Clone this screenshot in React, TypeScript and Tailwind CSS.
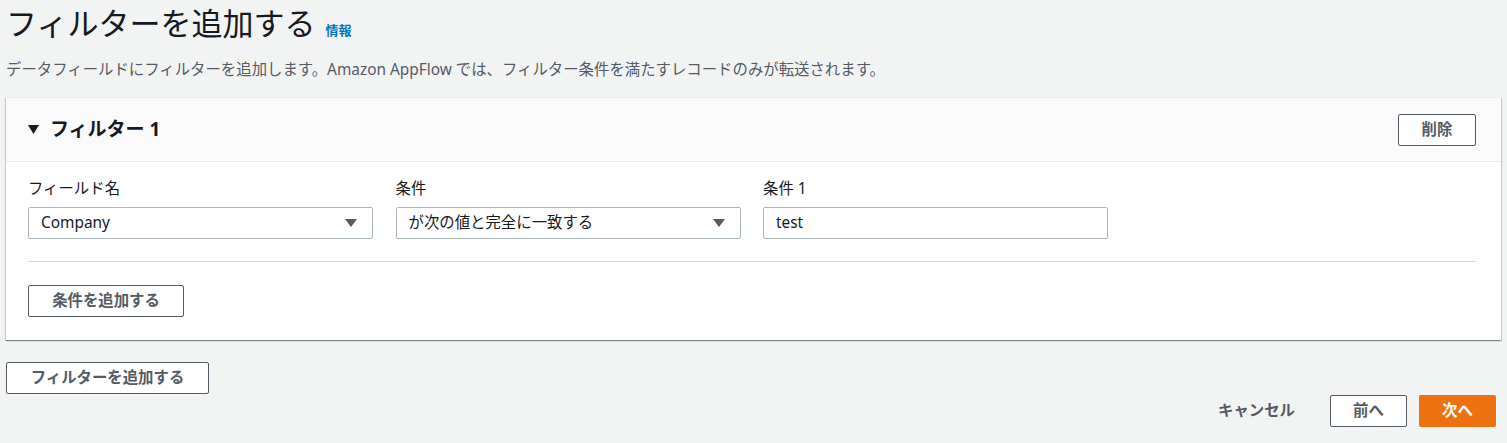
import React from "react";

const font = { fontFamily: '"Noto Sans", "Noto Sans CJK JP", sans-serif' };

const Caret = ({ className = "" }: { className?: string }) => (
  <svg width="12" height="8" viewBox="0 0 12 8" className={className}>
    <path d="M0 0 H12 L6 8 Z" fill="currentColor" />
  </svg>
);

const SelectBox = ({ value }: { value: string }) => (
  <div className="flex h-[32px] w-[345px] items-center justify-between rounded-[2px] border border-[#aab7b8] bg-white pl-[12px] pr-[15px] text-[15.4px] text-[#16191f]">
    <span>{value}</span>
    <Caret className="text-[#545b64]" />
  </div>
);

const Field = ({ label, children }: { label: string; children: React.ReactNode }) => (
  <div className="flex flex-col">
    <div className="mb-[8px] text-[15.4px] leading-[20px] text-[#16191f]">{label}</div>
    {children}
  </div>
);

const Button = ({ children, className = "" }: { children: React.ReactNode; className?: string }) => (
  <button
    className={`flex h-[32px] items-center justify-center rounded-[2px] border border-[#545b64] bg-white text-[15.4px] font-bold text-[#545b64] ${className}`}
  >
    {children}
  </button>
);

export default function App() {
  return (
    <div className="min-h-[443px] w-full bg-[#f2f3f3] pb-[16px]" style={font}>
      <div className="flex items-end px-[6px] pt-[3px]">
        <h1 className="text-[31px] font-normal leading-[40px] text-[#16191f]">フィルターを追加する</h1>
        <a className="mb-[3px] ml-[10px] text-[13px] font-bold leading-[20px] text-[#0073bb]">情報</a>
      </div>
      <p className="mt-[17px] px-[6px] text-[15.4px] leading-[20px] text-[#545b64]">
        データフィールドにフィルターを追加します。Amazon AppFlow では、フィルター条件を満たすレコードのみが転送されます。
      </p>

      <div className="mx-[6px] mt-[17px] border-t border-[#eaeded] bg-white shadow-[0_1px_1px_0_rgba(0,28,36,0.3),1px_1px_1px_0_rgba(0,28,36,0.15),-1px_1px_1px_0_rgba(0,28,36,0.15)]">
        <div className="flex h-[64px] items-center justify-between border-b border-[#eaeded] bg-[#fafafa] pl-[22px] pr-[25px]">
          <div className="flex items-center">
            <svg width="11" height="9" viewBox="0 0 11 9" className="text-[#16191f]">
              <path d="M0 0 H11 L5.5 9 Z" fill="currentColor" />
            </svg>
            <h2 className="ml-[11px] text-[19px] font-bold text-[#16191f]">フィルター 1</h2>
          </div>
          <Button className="w-[78px]">削除</Button>
        </div>

        <div className="pl-[22px] pr-[25px] pb-[23px] pt-[17px]">
          <div className="flex gap-[22.5px]">
            <Field label="フィールド名">
              <SelectBox value="Company" />
            </Field>
            <Field label="条件">
              <SelectBox value="が次の値と完全に一致する" />
            </Field>
            <Field label="条件 1">
              <div className="flex h-[32px] w-[345px] items-center rounded-[2px] border border-[#aab7b8] bg-white px-[12px] text-[15.4px] text-[#16191f]">
                test
              </div>
            </Field>
          </div>
          <div className="mt-[22px] border-t border-[#d5dbdb]" />
          <Button className="mt-[23px] w-[156px]">条件を追加する</Button>
        </div>
      </div>

      <div className="px-[6px]">
        <Button className="mt-[22px] w-[203px]">フィルターを追加する</Button>
      </div>

      <div className="mt-[1px] flex items-center justify-end pr-[11px]">
        <button className="mr-[35px] text-[15.4px] font-bold text-[#545b64]">キャンセル</button>
        <Button className="w-[77px]">前へ</Button>
        <button className="ml-[12px] flex h-[32px] w-[77px] items-center justify-center rounded-[2px] bg-[#ec7211] text-[15.4px] font-bold text-white">
          次へ
        </button>
      </div>
    </div>
  );
}
